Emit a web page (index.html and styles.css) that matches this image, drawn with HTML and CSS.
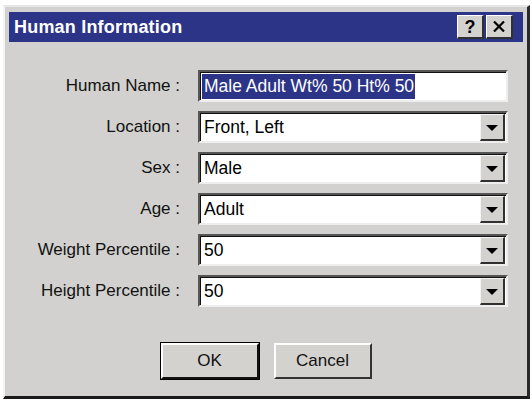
FILE: index.html
```html
<!DOCTYPE html>
<html lang="en">
<head>
  <meta charset="UTF-8">
  <title>Human Information</title>
  <link rel="stylesheet" href="styles.css">
</head>
<body>
  <div class="window">
    <div class="titlebar">
      <span class="title">Human Information</span>
      <div class="title-btns">
        <button class="tbtn help">?</button>
        <button class="tbtn close">
          <svg width="12" height="11" viewBox="0 0 12 11"><path d="M1 0.5 L11 10.5 M11 0.5 L1 10.5" stroke="#000" stroke-width="2.2"/></svg>
        </button>
      </div>
    </div>

    <div class="form">
      <label>Human Name :</label>
      <div class="field"><span class="sel">Male Adult Wt% 50 Ht% 50</span></div>

      <label>Location :</label>
      <div class="field combo"><span class="val">Front, Left</span><span class="drop"><i></i></span></div>

      <label>Sex :</label>
      <div class="field combo"><span class="val">Male</span><span class="drop"><i></i></span></div>

      <label>Age :</label>
      <div class="field combo"><span class="val">Adult</span><span class="drop"><i></i></span></div>

      <label>Weight Percentile :</label>
      <div class="field combo"><span class="val">50</span><span class="drop"><i></i></span></div>

      <label>Height Percentile :</label>
      <div class="field combo"><span class="val">50</span><span class="drop"><i></i></span></div>
    </div>

    <div class="actions">
      <button class="btn default">OK</button>
      <button class="btn">Cancel</button>
    </div>
  </div>
</body>
</html>
```

FILE: styles.css
```css
* {
  margin: 0;
  padding: 0;
  box-sizing: border-box;
}

body {
  background: #fff;
  font-family: 'Liberation Sans', Arial, sans-serif;
  padding: 5px 2px 7px 3px;
}

.window {
  width: 527px;
  height: 394px;
  background: #d2d1cf;
  border-top: 2px solid #e6e6e6;
  border-left: 2px solid #f4f4f4;
  border-right: 3px solid #2a2a2a;
  border-bottom: 3px solid #1a1a1a;
  padding: 4px 4px 0 4px;
  display: flex;
  flex-direction: column;
}

.titlebar {
  height: 30px;
  margin-top: 1px;
  background: #2c3488;
  display: flex;
  align-items: center;
  justify-content: space-between;
  padding: 0 10px 0 5px;
}

.title {
  color: #fff;
  font-weight: bold;
  font-size: 18px;
  letter-spacing: 0.2px;
}

.title-btns {
  display: flex;
  gap: 2px;
}

.tbtn {
  width: 27px;
  height: 24px;
  background: #d4d2cf;
  border-top: 1px solid #fff;
  border-left: 1px solid #fff;
  border-right: 2px solid #303030;
  border-bottom: 2px solid #303030;
  font-family: 'Liberation Sans', Arial, sans-serif;
  font-weight: bold;
  font-size: 18px;
  line-height: 20px;
  color: #000;
  display: flex;
  align-items: center;
  justify-content: center;
}

.form {
  margin-top: 28px;
  display: grid;
  grid-template-columns: 171px 310px;
  column-gap: 18px;
  row-gap: 9px;
}

.form label {
  font-size: 17px;
  color: #111;
  text-align: right;
  align-self: center;
}

.field {
  height: 32px;
  background: #fff;
  border-top: 2px solid #555;
  border-left: 2px solid #555;
  border-right: 2px solid #eee;
  border-bottom: 2px solid #eee;
  box-shadow: inset 1px 1px 0 #111;
  display: flex;
  align-items: center;
  font-size: 17.5px;
  color: #000;
}

.sel {
  background: #2c3488;
  color: #fff;
  margin-left: 2px;
  padding: 2px 1px 2px 2px;
}

.val {
  flex: 1;
  padding-left: 4px;
}

.drop {
  flex-shrink: 0;
  width: 25px;
  height: 27px;
  align-self: flex-start;
  margin-top: 1px;
  margin-right: 1px;
  background: #d4d2cf;
  border-top: 1px solid #f4f4f4;
  border-left: 1px solid #f4f4f4;
  border-right: 2px solid #303030;
  border-bottom: 2px solid #303030;
  display: flex;
  align-items: center;
  justify-content: center;
  padding-top: 2px;
}

.drop i {
  width: 0;
  height: 0;
  border-left: 6px solid transparent;
  border-right: 6px solid transparent;
  border-top: 6px solid #000;
}

.actions {
  margin-top: 36px;
  display: flex;
  justify-content: center;
  gap: 15px;
}

.btn {
  width: 98px;
  height: 36px;
  background: #d4d2cf;
  border-top: 2px solid #fff;
  border-left: 2px solid #fff;
  border-right: 2px solid #333;
  border-bottom: 2px solid #333;
  font-family: 'Liberation Sans', Arial, sans-serif;
  font-size: 17px;
  color: #111;
}

.btn.default {
  outline: 1px solid #000;
  border-right-color: #111;
  border-bottom-color: #111;
}
```
